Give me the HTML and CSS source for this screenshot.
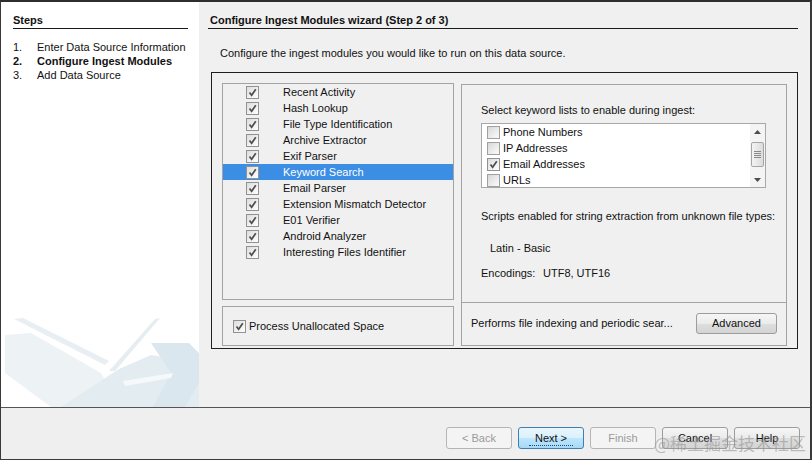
FILE: index.html
```html
<!DOCTYPE html>
<html>
<head>
<meta charset="utf-8">
<link rel="stylesheet" href="styles.css">
</head>
<body>
<div class="frame">
  <div class="main">
    <aside class="sidebar">
      <div class="steps-title">Steps</div>
      <ol class="steps">
        <li><span class="num">1.</span>Enter Data Source Information</li>
        <li class="current"><span class="num">2.</span>Configure Ingest Modules</li>
        <li><span class="num">3.</span>Add Data Source</li>
      </ol>
      <svg class="decor" width="198" height="90" viewBox="0 0 198 90">
        <polygon points="4,18 30,16 100,56 118,90 50,90 4,56" fill="#edf2f5"/>
        <polygon points="13,2 22,1 108,44 104,48" fill="#e8eef2"/>
        <polygon points="154,2 159,1 114,54 108,54" fill="#e6edf1"/>
        <polygon points="60,90 118,52 150,38 198,46 198,90" fill="#e3ecf1"/>
        <polygon points="150,26 188,26 198,36 198,66 184,90 152,90 170,56" fill="#dbe7ee"/>
        <polygon points="122,64 172,56 170,61 124,69" fill="#f6f9fb"/>
      </svg>
    </aside>
    <section class="content">
      <div class="wiz-title">Configure Ingest Modules wizard (Step 2 of 3)</div>
      <p class="intro">Configure the ingest modules you would like to run on this data source.</p>
      <div class="box">
        <div class="left-col">
          <div class="module-list">
            <div class="row"><span class="cb"><svg viewBox="0 0 11 11"><path d="M2.5 5.5 L4.6 8.2 L8.8 2.2"/></svg></span><span class="label">Recent Activity</span></div>
            <div class="row"><span class="cb"><svg viewBox="0 0 11 11"><path d="M2.5 5.5 L4.6 8.2 L8.8 2.2"/></svg></span><span class="label">Hash Lookup</span></div>
            <div class="row"><span class="cb"><svg viewBox="0 0 11 11"><path d="M2.5 5.5 L4.6 8.2 L8.8 2.2"/></svg></span><span class="label">File Type Identification</span></div>
            <div class="row"><span class="cb"><svg viewBox="0 0 11 11"><path d="M2.5 5.5 L4.6 8.2 L8.8 2.2"/></svg></span><span class="label">Archive Extractor</span></div>
            <div class="row"><span class="cb"><svg viewBox="0 0 11 11"><path d="M2.5 5.5 L4.6 8.2 L8.8 2.2"/></svg></span><span class="label">Exif Parser</span></div>
            <div class="row selected"><span class="cb"><svg viewBox="0 0 11 11"><path d="M2.5 5.5 L4.6 8.2 L8.8 2.2"/></svg></span><span class="label">Keyword Search</span></div>
            <div class="row"><span class="cb"><svg viewBox="0 0 11 11"><path d="M2.5 5.5 L4.6 8.2 L8.8 2.2"/></svg></span><span class="label">Email Parser</span></div>
            <div class="row"><span class="cb"><svg viewBox="0 0 11 11"><path d="M2.5 5.5 L4.6 8.2 L8.8 2.2"/></svg></span><span class="label">Extension Mismatch Detector</span></div>
            <div class="row"><span class="cb"><svg viewBox="0 0 11 11"><path d="M2.5 5.5 L4.6 8.2 L8.8 2.2"/></svg></span><span class="label">E01 Verifier</span></div>
            <div class="row"><span class="cb"><svg viewBox="0 0 11 11"><path d="M2.5 5.5 L4.6 8.2 L8.8 2.2"/></svg></span><span class="label">Android Analyzer</span></div>
            <div class="row"><span class="cb"><svg viewBox="0 0 11 11"><path d="M2.5 5.5 L4.6 8.2 L8.8 2.2"/></svg></span><span class="label">Interesting Files Identifier</span></div>
          </div>
          <div class="unalloc">
            <span class="cb"><svg viewBox="0 0 11 11"><path d="M2.5 5.5 L4.6 8.2 L8.8 2.2"/></svg></span>
            <span>Process Unallocated Space</span>
          </div>
        </div>
        <div class="settings">
          <div class="settings-body">
            <div class="s-label">Select keyword lists to enable during ingest:</div>
            <div class="listbox">
              <div class="lb-rows">
                <div class="lb-row"><span class="cb empty"></span><span>Phone Numbers</span></div>
                <div class="lb-row"><span class="cb empty"></span><span>IP Addresses</span></div>
                <div class="lb-row"><span class="cb"><svg viewBox="0 0 11 11"><path d="M2.5 5.5 L4.6 8.2 L8.8 2.2"/></svg></span><span>Email Addresses</span></div>
                <div class="lb-row"><span class="cb empty"></span><span>URLs</span></div>
              </div>
              <div class="scrollbar">
                <div class="arrow"><svg width="7" height="4" viewBox="0 0 7 4"><path d="M0 4 L3.5 0 L7 4 Z" fill="#4d4d4d"/></svg></div>
                <div class="thumb"><svg width="7" height="8" viewBox="0 0 7 8"><path d="M0 0.5H7M0 2.5H7M0 4.5H7M0 6.5H7" stroke="#8a8a8a" stroke-width="1"/></svg></div>
                <div class="track"></div>
                <div class="arrow"><svg width="7" height="4" viewBox="0 0 7 4"><path d="M0 0 L3.5 4 L7 0 Z" fill="#4d4d4d"/></svg></div>
              </div>
            </div>
            <div class="s-label scripts">Scripts enabled for string extraction from unknown file types:</div>
            <div class="latin">Latin - Basic</div>
            <div class="encodings"><span class="enc-label">Encodings:</span><span>UTF8, UTF16</span></div>
          </div>
          <div class="settings-foot">
            <span>Performs file indexing and periodic sear...</span>
            <button class="btn advanced">Advanced</button>
          </div>
        </div>
      </div>
    </section>
  </div>
  <div class="footer">
    <button class="btn disabled">&lt; Back</button>
    <button class="btn focused"><span class="focus-text">Next &gt;</span></button>
    <button class="btn disabled">Finish</button>
    <button class="btn">Cancel</button>
    <button class="btn">Help</button>
  </div>
  <div class="watermark">@稀土掘金技术社区</div>
</div>
</body>
</html>
```

FILE: styles.css
```css
* { box-sizing: border-box; }

html, body {
  margin: 0;
  padding: 0;
  background: #ffffff;
}

body {
  font-family: "Liberation Sans", Arial, sans-serif;
  font-size: 11px;
  line-height: 13px;
  color: #111;
}

.frame {
  position: relative;
  width: 812px;
  height: 460px;
  border-top: 2px solid #2e2e2e;
  border-left: 1px solid #3a3a3a;
  border-right: 2px solid #3a3a3a;
  border-bottom: 1px solid #3a3a3a;
  display: flex;
  flex-direction: column;
  overflow: hidden;
}

.main {
  display: flex;
  height: 405px;
}

/* ---------- sidebar ---------- */
.sidebar {
  width: 198px;
  background: #ffffff;
  padding: 12px 11px 0 12px;
  display: flex;
  flex-direction: column;
}

.steps-title {
  font-weight: bold;
  padding-bottom: 1px;
  border-bottom: 1px solid #1a1a1a;
}

.steps {
  list-style: none;
  margin: 11px 0 0 0;
  padding: 0;
}

.steps li {
  line-height: 14px;
  white-space: nowrap;
}

.steps .num {
  display: inline-block;
  width: 24px;
}

.steps li.current {
  font-weight: bold;
}

.decor {
  display: block;
  margin-top: auto;
  margin-left: -12px;
}

/* ---------- content ---------- */
.content {
  flex: 1;
  background: #f0f0f0;
  padding: 12px 12px 0 9px;
  display: flex;
  flex-direction: column;
}

.wiz-title {
  font-weight: bold;
  padding-left: 2px;
  padding-bottom: 1px;
  border-bottom: 1px solid #1a1a1a;
}

.intro {
  margin: 18px 0 0 12px;
}

.box {
  margin: 12px 0 0 3px;
  height: 277px;
  border: 1px solid #1e1e1e;
  padding: 11px 10px 2px 10px;
  display: flex;
  gap: 7px;
}

.left-col {
  width: 232px;
  display: flex;
  flex-direction: column;
  gap: 6px;
}

.module-list {
  height: 217px;
  border: 1px solid #a3a3a3;
  padding-top: 0;
  margin-top: -1px;
}

.row {
  height: 16px;
  display: flex;
  align-items: center;
  padding-left: 23px;
  white-space: nowrap;
}

.row .label {
  margin-left: 24px;
}

.row.selected {
  background: #3b8ee4;
  color: #ffffff;
}

.cb {
  width: 13px;
  height: 13px;
  flex: none;
  border: 1px solid #929292;
  background: linear-gradient(135deg, #dcdcdc 0%, #f2f2f2 60%, #fdfdfd 100%);
  display: inline-flex;
  align-items: center;
  justify-content: center;
}

.cb svg {
  width: 11px;
  height: 11px;
  display: block;
}

.cb svg path {
  fill: none;
  stroke: #4e4e4e;
  stroke-width: 1.7;
}

.unalloc {
  flex: 1;
  border: 1px solid #a3a3a3;
  display: flex;
  align-items: center;
  gap: 3px;
  padding-left: 10px;
  padding-top: 1px;
}

/* ---------- settings panel ---------- */
.settings {
  flex: 1;
  border: 1px solid #a3a3a3;
  display: flex;
  flex-direction: column;
}

.settings-body {
  height: 218px;
  border-bottom: 1px solid #a3a3a3;
  padding: 19px 0 0 19px;
}

.listbox {
  margin-top: 6px;
  width: 285px;
  height: 65px;
  border: 1px solid #a8a8a8;
  background: #ffffff;
  display: flex;
  overflow: hidden;
}

.lb-rows {
  flex: 1;
  padding-left: 5px;
}

.lb-row {
  height: 16px;
  display: flex;
  align-items: center;
  gap: 3px;
  white-space: nowrap;
}

.cb.empty {
  background: linear-gradient(135deg, #d6d6d6 0%, #ececec 55%, #fafafa 100%);
  border-color: #a0a0a0;
}

.scrollbar {
  width: 15px;
  display: flex;
  flex-direction: column;
  background: #f4f4f4;
}

.arrow {
  height: 15px;
  display: flex;
  align-items: center;
  justify-content: center;
}

.thumb {
  height: 25px;
  margin: 3px 1px 0 1px;
  border: 1px solid #a5a5a5;
  border-radius: 2px;
  background: linear-gradient(90deg, #f3f3f3, #dcdcdc);
  display: flex;
  align-items: center;
  justify-content: center;
}

.track {
  flex: 1;
}

.scripts {
  margin-top: 22px;
}

.latin {
  margin: 19px 0 0 9px;
}

.encodings {
  margin-top: 12px;
  display: flex;
}

.enc-label {
  width: 62px;
}

.settings-foot {
  flex: 1;
  display: flex;
  align-items: center;
  justify-content: space-between;
  padding: 0 9px 2px 9px;
}

/* ---------- buttons ---------- */
.btn {
  font-family: "Liberation Sans", Arial, sans-serif;
  font-size: 11px;
  color: #111;
  width: 66px;
  height: 22px;
  padding: 0;
  border: 1px solid #9c9c9c;
  border-radius: 3px;
  background: linear-gradient(180deg, #f6f6f6 0%, #ebebeb 50%, #dedede 51%, #d4d4d4 100%);
}

.btn.advanced {
  width: 81px;
  height: 21px;
}

.btn.disabled {
  color: #9a9a9a;
  border-color: #b5b5b5;
  background: #f4f4f4;
}

.btn.focused {
  border-color: #3c7fb1;
  background: linear-gradient(180deg, #eaf6fd 0%, #d9f0fc 50%, #bee6fd 51%, #a7d9f5 100%);
}

.focus-text {
  padding: 0 6px 1px 6px;
  border-bottom: 1px dotted #1c4a80;
}

.footer {
  flex: 1;
  background: #efefef;
  border-top: 1px solid #555555;
  display: flex;
  justify-content: flex-end;
  align-items: flex-start;
  gap: 6px;
  padding: 19px 10px 0 0;
}

.watermark {
  position: absolute;
  right: 4px;
  bottom: 6px;
  font-family: "Noto Sans CJK SC", "Liberation Sans", sans-serif;
  font-size: 17px;
  line-height: 20px;
  color: rgba(150, 150, 150, 0.6);
}
```
